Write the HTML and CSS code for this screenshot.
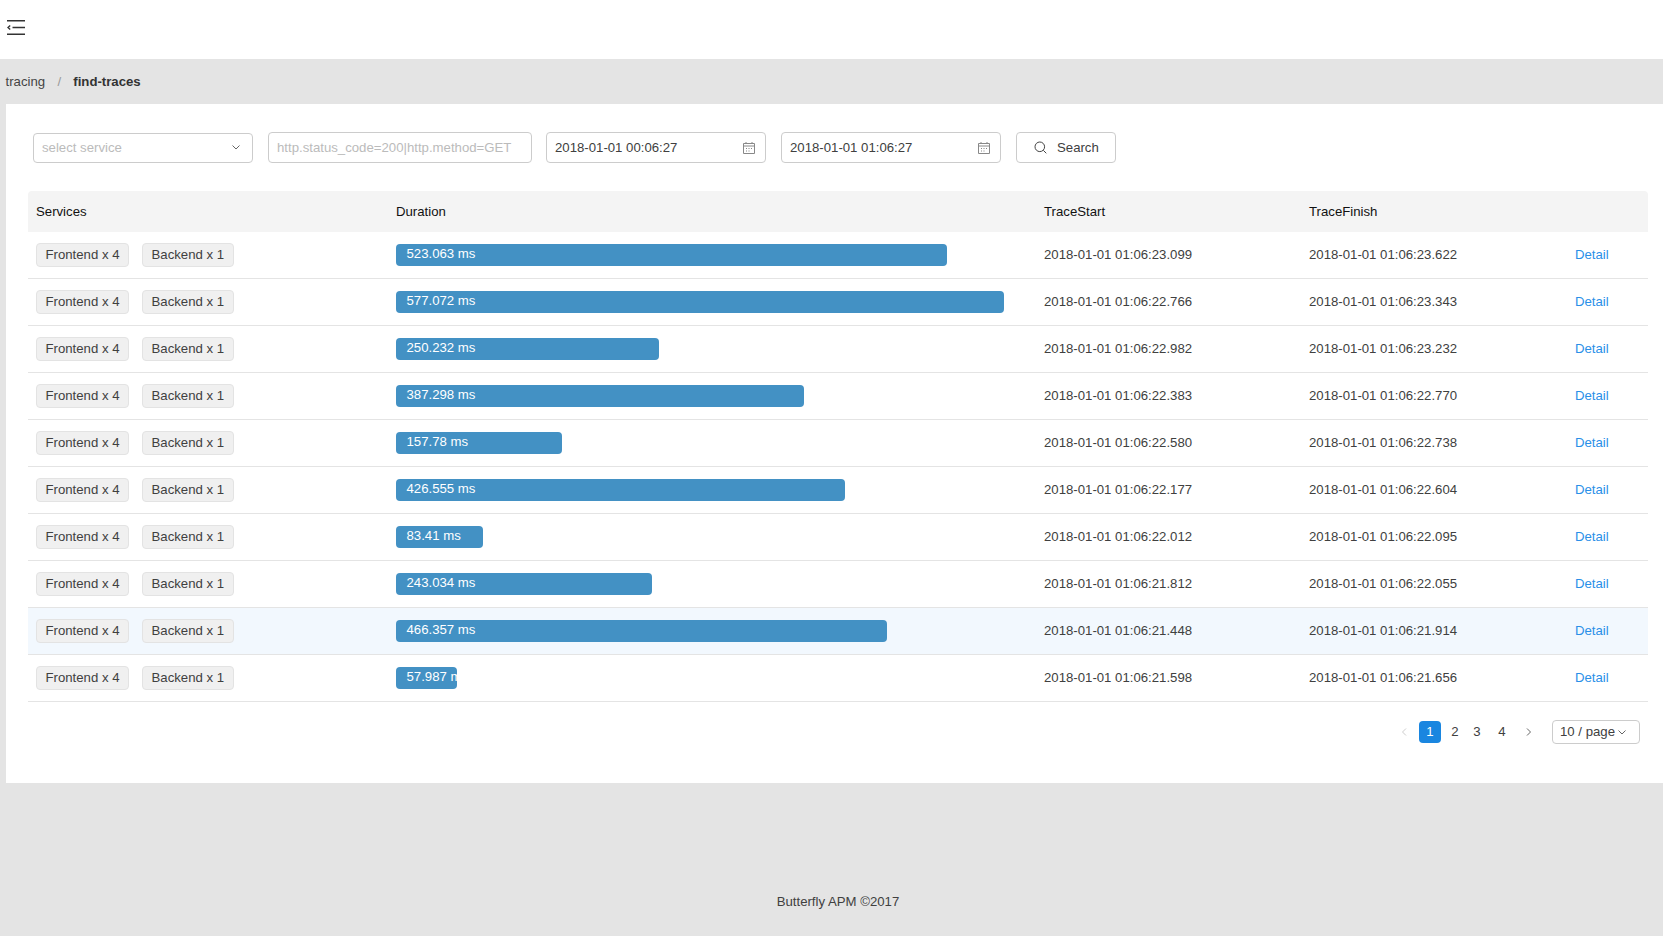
FILE: index.html
```html
<!DOCTYPE html>
<html lang="en">
<head>
<meta charset="utf-8">
<title>find-traces</title>
<link rel="stylesheet" href="styles.css">
</head>
<body>
<header class="topbar">
  <svg class="menu-icon" viewBox="0 0 18 15" width="18" height="15"><path d="M0 .7h18M5.500 7.500H18M0 14.300h18" stroke="#333" stroke-width="1.400" fill="none"/><path d="M3.200 5.500 1 7.500l2.200 2" stroke="#333" stroke-width="1.400" fill="none"/></svg>
</header>
<nav class="crumbs"><span>tracing</span><span class="sep">/</span><strong>find-traces</strong></nav>
<main class="content">
  <form class="filters">
    <div class="control select"><span class="placeholder">select service</span>
      <svg class="chev" viewBox="0 0 8 5" width="8" height="5"><path d="M.5.500 4 4 7.500.5" stroke="#666" fill="none"/></svg></div>
    <div class="control query"><span class="placeholder">http.status_code=200|http.method=GET</span></div>
    <div class="control date"><span>2018-01-01 00:06:27</span>
      <svg class="cal" viewBox="0 0 12 12" width="12" height="12"><path d="M.5 1.500h11v10H.5zM.5 4h11M3 0v2M9 0v2" stroke="#888" fill="none"/><path d="M3 6h1v1H3zM5.500 6h1v1h-1zM8 6h1v1H8zM3 8.500h1v1H3zM5.500 8.500h1v1h-1z" fill="#888"/></svg></div>
    <div class="control date"><span>2018-01-01 01:06:27</span>
      <svg class="cal" viewBox="0 0 12 12" width="12" height="12"><path d="M.5 1.500h11v10H.5zM.5 4h11M3 0v2M9 0v2" stroke="#888" fill="none"/><path d="M3 6h1v1H3zM5.500 6h1v1h-1zM8 6h1v1H8zM3 8.500h1v1H3zM5.500 8.500h1v1h-1z" fill="#888"/></svg></div>
    <div class="control search"><svg viewBox="0 0 13 13" width="13" height="13"><circle cx="5.800" cy="5.800" r="4.800" stroke="#444" fill="none"/><path d="M9.300 9.300l3 3" stroke="#444"/></svg><span>Search</span></div>
  </form>
  <table class="traces">
    <colgroup><col class="c1"><col class="c2"><col class="c3"><col class="c4"><col></colgroup>
    <thead><tr><th>Services</th><th>Duration</th><th>TraceStart</th><th>TraceFinish</th><th></th></tr></thead>
    <tbody>
      <tr><td><span class="tag">Frontend x 4</span><span class="tag">Backend x 1</span></td><td><div class="bar" style="width:551px">523.063 ms</div></td><td>2018-01-01 01:06:23.099</td><td>2018-01-01 01:06:23.622</td><td><a>Detail</a></td></tr>
      <tr><td><span class="tag">Frontend x 4</span><span class="tag">Backend x 1</span></td><td><div class="bar" style="width:608px">577.072 ms</div></td><td>2018-01-01 01:06:22.766</td><td>2018-01-01 01:06:23.343</td><td><a>Detail</a></td></tr>
      <tr><td><span class="tag">Frontend x 4</span><span class="tag">Backend x 1</span></td><td><div class="bar" style="width:263px">250.232 ms</div></td><td>2018-01-01 01:06:22.982</td><td>2018-01-01 01:06:23.232</td><td><a>Detail</a></td></tr>
      <tr><td><span class="tag">Frontend x 4</span><span class="tag">Backend x 1</span></td><td><div class="bar" style="width:408px">387.298 ms</div></td><td>2018-01-01 01:06:22.383</td><td>2018-01-01 01:06:22.770</td><td><a>Detail</a></td></tr>
      <tr><td><span class="tag">Frontend x 4</span><span class="tag">Backend x 1</span></td><td><div class="bar" style="width:166px">157.78 ms</div></td><td>2018-01-01 01:06:22.580</td><td>2018-01-01 01:06:22.738</td><td><a>Detail</a></td></tr>
      <tr><td><span class="tag">Frontend x 4</span><span class="tag">Backend x 1</span></td><td><div class="bar" style="width:449px">426.555 ms</div></td><td>2018-01-01 01:06:22.177</td><td>2018-01-01 01:06:22.604</td><td><a>Detail</a></td></tr>
      <tr><td><span class="tag">Frontend x 4</span><span class="tag">Backend x 1</span></td><td><div class="bar" style="width:87px">83.41 ms</div></td><td>2018-01-01 01:06:22.012</td><td>2018-01-01 01:06:22.095</td><td><a>Detail</a></td></tr>
      <tr><td><span class="tag">Frontend x 4</span><span class="tag">Backend x 1</span></td><td><div class="bar" style="width:256px">243.034 ms</div></td><td>2018-01-01 01:06:21.812</td><td>2018-01-01 01:06:22.055</td><td><a>Detail</a></td></tr>
      <tr class="hover"><td><span class="tag">Frontend x 4</span><span class="tag">Backend x 1</span></td><td><div class="bar" style="width:491px">466.357 ms</div></td><td>2018-01-01 01:06:21.448</td><td>2018-01-01 01:06:21.914</td><td><a>Detail</a></td></tr>
      <tr><td><span class="tag">Frontend x 4</span><span class="tag">Backend x 1</span></td><td><div class="bar" style="width:61px">57.987 ms</div></td><td>2018-01-01 01:06:21.598</td><td>2018-01-01 01:06:21.656</td><td><a>Detail</a></td></tr>
    </tbody>
  </table>
  <div class="pager">
    <svg class="arrow prev" viewBox="0 0 6 8" width="6" height="8"><path d="M5 .5 1.500 4 5 7.500" stroke="#ccc" fill="none"/></svg>
    <span class="page active">1</span><span class="page tight">2</span><span class="page">3</span><span class="page">4</span>
    <svg class="arrow next" viewBox="0 0 6 8" width="6" height="8"><path d="M1 .5 4.500 4 1 7.500" stroke="#666" fill="none"/></svg>
    <div class="size">10 / page<svg viewBox="0 0 8 5" width="8" height="5"><path d="M.5.500 4 4 7.500.5" stroke="#666" fill="none"/></svg></div>
  </div>
</main>
<footer class="foot">Butterfly APM ©2017</footer>
</body>
</html>
```
FILE: styles.css
```css
* { box-sizing: border-box; }
html, body { margin: 0; height: 100%; }
body { background: #e4e4e4; font: 13.2px/1.5 "Liberation Sans", Arial, sans-serif; color: #404040; overflow: hidden; }
.topbar { height: 59px; background: #fff; display: flex; align-items: flex-start; padding: 20px 0 0 7px; }
.menu-icon { display: block; }
.crumbs { height: 45px; display: flex; align-items: center; padding-left: 5.500px; color: #444; }
.crumbs .sep { margin: 0 12px 0 12.500px; color: #999; }
.crumbs strong { color: #333; }
.content { height: 679px; margin-left: 6px; background: #fff; padding: 28px 15px 0 22px; }
.filters { display: flex; align-items: center; margin-left: 5px; height: 31px; }
.control { height: 31px; border: 1px solid #ccc; border-radius: 4px; display: flex; align-items: center; justify-content: space-between; padding: 0 8px; background: #fff; margin-right: 15px; }
.select { width: 220px; height: 30px; padding-right: 12px; }
.query { width: 264px; margin-right: 14px; }
.date { width: 220px; padding-right: 10px; }
.search { width: 100px; justify-content: flex-start; gap: 10px; padding-left: 17px; }
.placeholder { color: #bbb; }
.cal, .chev { flex: none; }
.traces { width: 1620px; margin-top: 28px; border-collapse: separate; border-spacing: 0; table-layout: fixed; }
.c1 { width: 360px; }
.c2 { width: 648px; }
.c3 { width: 265px; }
.c4 { width: 266px; }
.traces th { height: 41px; background: #f4f4f4; text-align: left; font-weight: 400; color: #111; padding: 0 8px; }
.traces th:first-child { border-top-left-radius: 4px; }
.traces th:last-child { border-top-right-radius: 4px; }
.traces td { height: 47px; padding: 0 8px; border-bottom: 1px solid #e4e4e4; white-space: nowrap; }
.traces .hover td { background: #f2f8fe; }
.tag { display: inline-block; height: 24px; line-height: 22px; padding: 0 8.500px; margin-right: 13px; background: #f0f0f0; border: 1px solid #e3e3e3; border-radius: 4px; }
.bar { height: 22px; line-height: 20px; padding-left: 10.500px; background: #4391c4; color: #fff; border-radius: 4px; overflow: hidden; white-space: nowrap; }
.traces a { color: #2a8fe8; }
.pager { display: flex; align-items: center; justify-content: flex-end; margin-top: 18px; height: 24px; }
.prev { margin-right: 12.500px; }
.next { margin: 0 20px 0 10px; }
.page { width: 22px; height: 22px; line-height: 22px; text-align: center; border-radius: 4px; margin-right: 3px; }
.page.tight { margin-right: 0; }
.page.active { background: #1a86e0; color: #fff; }
.size { width: 88px; height: 24px; margin-right: 8px; border: 1px solid #ccc; border-radius: 4px; display: flex; align-items: center; gap: 3px; padding-left: 7px; }
.foot { height: 153px; display: flex; align-items: flex-end; justify-content: center; padding: 0 0 24px 13px; }
```
